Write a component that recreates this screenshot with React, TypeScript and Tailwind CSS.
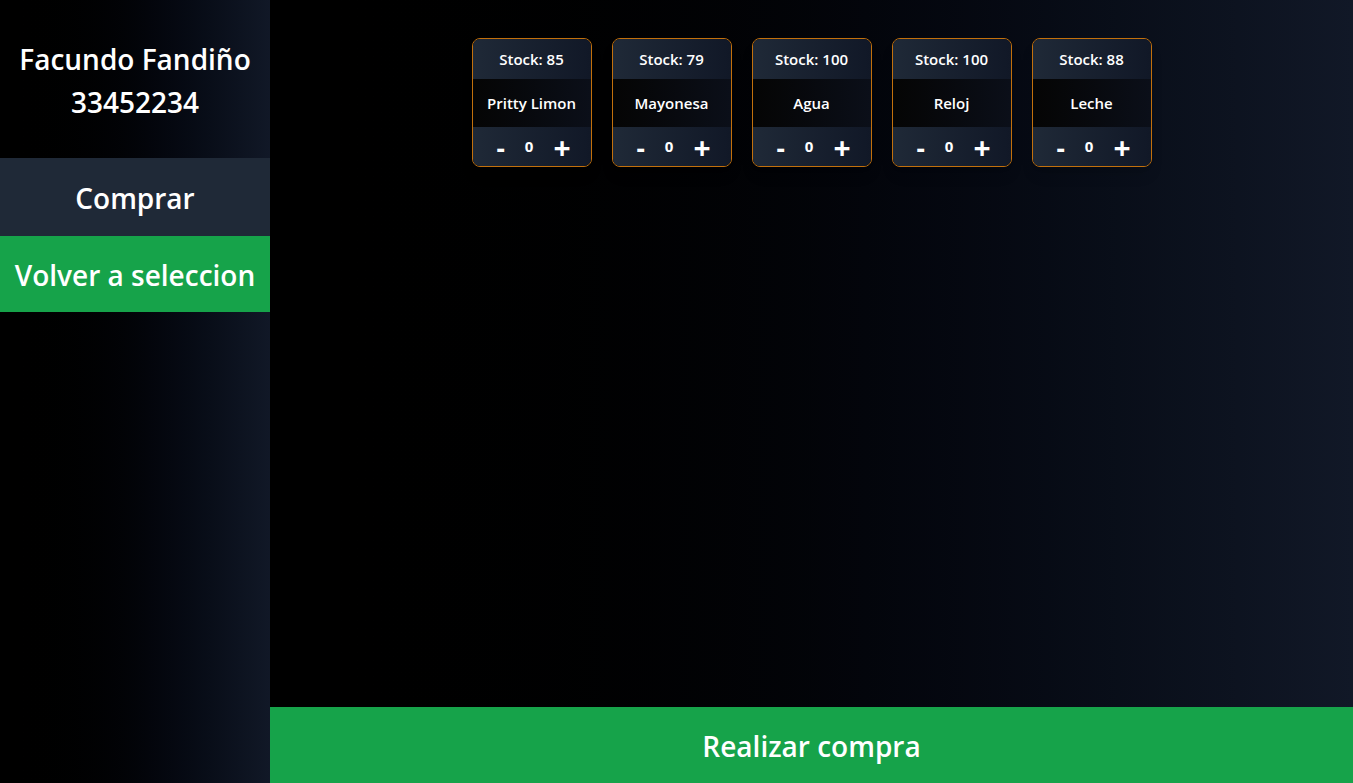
import { useState } from "react"

const productos = [
  { nombre: "Pritty Limon", stock: 85 },
  { nombre: "Mayonesa", stock: 79 },
  { nombre: "Agua", stock: 100 },
  { nombre: "Reloj", stock: 100 },
  { nombre: "Leche", stock: 88 },
]

function Card({ nombre, stock }: { nombre: string; stock: number }) {
  const [cantidad, setCantidad] = useState(0)

  return (
    <div className="w-[120px] rounded-lg border border-[#c2700c] overflow-hidden shadow-lg text-white">
      <div className="h-10 flex items-center justify-center bg-gradient-to-r from-[#1f2937] to-[#111827] text-[15px] font-semibold">
        Stock: {stock}
      </div>
      <div className="h-12 flex items-center justify-center bg-gradient-to-r from-[#050505] to-[#0b0f19] text-[15px] font-semibold">
        {nombre}
      </div>
      <div className="h-[39px] flex items-center justify-center gap-5 pl-1 bg-gradient-to-r from-[#1f2937] to-[#111827]">
        <button className="text-[26px] font-bold leading-none mt-0.5" onClick={() => setCantidad(Math.max(0, cantidad - 1))}>
          -
        </button>
        <span className="text-[15px] font-bold">{cantidad}</span>
        <button className="text-[30px] font-bold leading-none mt-0.5" onClick={() => setCantidad(cantidad + 1)}>
          +
        </button>
      </div>
    </div>
  )
}

export default function App() {
  return (
    <div className="h-[783px] flex text-white" style={{ fontFamily: '"Open Sans", "Noto Sans", sans-serif' }}>
      <aside className="w-[270px] flex flex-col bg-gradient-to-r from-black to-[#111827]">
        <div className="h-[158px] flex flex-col items-center justify-center text-[28px] font-semibold leading-[43px] pt-1">
          <span>Facundo Fandiño</span>
          <span>33452234</span>
        </div>
        <button className="h-[78px] pt-0.5 bg-[#1f2937] text-[28px] font-semibold">Comprar</button>
        <button className="h-[76px] pt-0.5 bg-[#16a34a] text-[28px] font-semibold">Volver a seleccion</button>
      </aside>

      <main className="flex-1 flex flex-col bg-gradient-to-r from-black to-[#111827]">
        <div className="flex-1 flex justify-center gap-5 pt-[38px]">
          {productos.map((p) => (
            <div key={p.nombre}>
              <Card nombre={p.nombre} stock={p.stock} />
            </div>
          ))}
        </div>
        <button className="h-[76px] pt-0.5 bg-[#16a34a] text-[28px] font-semibold">Realizar compra</button>
      </main>
    </div>
  )
}
